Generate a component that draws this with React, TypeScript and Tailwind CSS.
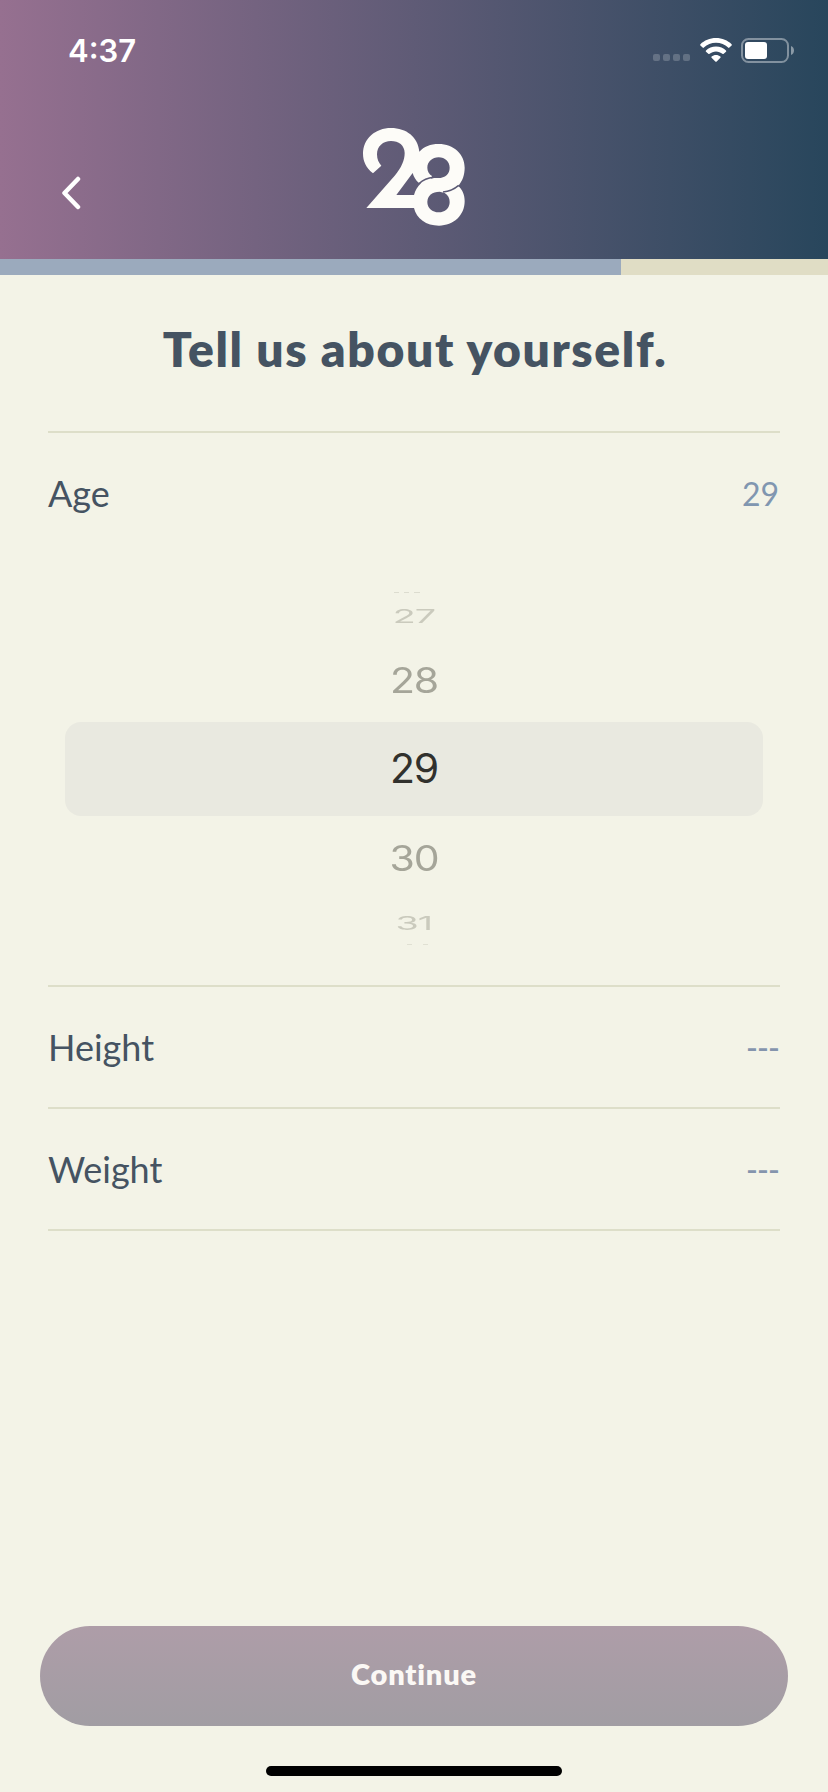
interface RowProps {
  label: string;
  value?: string;
}

interface PickerItem {
  value: number;
  className: string;
}

const PICKER_ITEMS: PickerItem[] = [
  { value: 27, className: "h-[46px] text-[#cacabd] scale-x-[0.92] scale-y-[0.47]" },
  { value: 28, className: "h-[83px] text-[#a5a599] scale-y-[0.86]" },
  { value: 29, className: "h-[94px] text-[#31312d]" },
  { value: 30, className: "h-[86px] text-[#a5a599] scale-y-[0.86]" },
  { value: 31, className: "h-[42px] text-[#cacabd] scale-x-[0.92] scale-y-[0.47]" },
];

function StatusBar() {
  return (
    <div className="flex h-[100px] items-center justify-between pl-[68px] pr-[34px]">
      <span className="font-['Inter',sans-serif] text-[31px] font-semibold leading-[31px] text-white">4:37</span>
      <div className="flex items-center">
        <div className="mr-[10px] mt-[15px] flex gap-[3px]">
          <span className="h-[7px] w-[7px] rounded-[2px] bg-white/20" />
          <span className="h-[7px] w-[7px] rounded-[2px] bg-white/20" />
          <span className="h-[7px] w-[7px] rounded-[2px] bg-white/20" />
          <span className="h-[7px] w-[7px] rounded-[2px] bg-white/20" />
        </div>
        <svg className="mr-[9px] h-6 w-8" viewBox="0 0 32 24" fill="#fff">
          <path d="M16 0C22.2 0 27.800 2.400 31.600 6.200C32 6.600 32 7.100 31.600 7.500L29.400 9.600C29 10 28.500 10 28.100 9.600C24.900 6.500 20.700 4.800 16 4.800C11.300 4.800 7.100 6.500 3.900 9.600C3.500 10 3 10 2.600 9.600L.4 7.500C0 7.100 0 6.600.4 6.200C4.200 2.400 9.800 0 16 0Z" />
          <path d="M16 8.600C20 8.600 23.400 10.100 26 12.400C26.400 12.800 26.400 13.300 26 13.700L23.700 15.800C23.300 16.200 22.800 16.200 22.400 15.800C20.700 14.300 18.500 13.400 16 13.400C13.500 13.400 11.300 14.300 9.600 15.800C9.200 16.200 8.700 16.200 8.300 15.800L6 13.700C5.600 13.300 5.600 12.800 6 12.400C8.600 10.100 12 8.600 16 8.600Z" />
          <path d="M16 17C17.700 17 19.200 17.600 20.400 18.500C20.800 18.900 20.800 19.400 20.400 19.800L16.700 23.500C16.300 23.900 15.700 23.900 15.300 23.500L11.600 19.800C11.200 19.400 11.200 18.900 11.600 18.500C12.800 17.600 14.300 17 16 17Z" />
        </svg>
        <svg className="h-[25px] w-[53px]" viewBox="0 0 53 25">
          <rect x="1" y="1" width="46" height="23" rx="6.500" fill="none" stroke="#fff" strokeOpacity=".4" strokeWidth="2" />
          <rect x="4" y="4" width="22" height="17" rx="3" fill="#fff" />
          <path d="M50 8C54 9.600 54 15.400 50 17Z" fill="#fff" fillOpacity=".45" />
        </svg>
      </div>
    </div>
  );
}

function Logo() {
  return (
    <svg className="h-[98px] w-[102px]" viewBox="68 53 306 294">
      <mask id="logo-cut" maskUnits="userSpaceOnUse" x="60" y="45" width="320" height="310">
        <rect x="60" y="45" width="320" height="310" fill="#fff" />
        <path d="M217 188L168 254H221C225 240 232 229 242 219L235 217C226 210 220 199 217 188Z" fill="#000" />
        <path d="M275 197C266 191 261 182 261 172C261 154 276 141 295 141C314 141 328 154 328 172C328 191 315 203 293 203C285 203 278 203 272 205Z" fill="#000" />
        <path d="M313 248C323 254 328 264 328 275C328 293 314 306 295 306C276 306 261 293 261 275C261 256 276 244 298 244Z" fill="#000" />
        <path d="M236 220C248 209 261 203 280 201M308 245C326 243 341 237 355 225" fill="none" stroke="#000" strokeWidth="4.500" />
      </mask>
      <path
        mask="url(#logo-cut)"
        fill="#fdfcf8"
        d="M78 293L163 196C183 172 193 150 193 128C193 105 175 92 152 92C128 92 110 108 110 132C110 147 115 157 123 166L98 189C77 172 68 153 68 130C68 85 105 53 152 53C198 53 233 80 237 124C251 109 270 101 295 101C340 101 373 132 373 172C373 193 367 212 353 227C367 237 373 255 373 273C373 315 340 346 296 346C258 346 228 325 221 293Z"
      />
    </svg>
  );
}

function Row({ label, value }: RowProps) {
  return (
    <div className="flex h-[120px] items-center justify-between">
      <span className="text-[36px] leading-[44px] text-[#455362]">{label}</span>
      {value ? (
        <span className="pr-px pt-[2px] text-[32px] leading-[44px] text-[#8096b0]">{value}</span>
      ) : (
        <span className="pr-px pt-[2px] text-[32px] font-medium leading-[44px] tracking-[-0.900px] text-[#8494ad]">---</span>
      )}
    </div>
  );
}

function AgePicker() {
  return (
    <div className="relative mx-[17px] h-[432px] font-['Inter',sans-serif] text-[41px] tracking-[-1.200px]">
      {/* Selected band */}
      <div className="absolute inset-x-0 top-[169px] h-[94px] rounded-2xl bg-[#e9e9e0]" />

      <div className="relative flex flex-col items-center pt-[39px]">
        <div className="mr-[14px] flex gap-[5px]">
          <span className="h-px w-[5px] bg-[#dcdccf]" />
          <span className="h-px w-[5px] bg-[#dcdccf]" />
          <span className="h-px w-[6px] bg-[#dcdccf]" />
        </div>
        {PICKER_ITEMS.map((item) => (
          <div key={item.value} className={`flex items-center justify-center ${item.className}`}>
            {item.value}
          </div>
        ))}
        <div className="ml-[7px] flex gap-[11px]">
          <span className="h-px w-[5px] bg-[#e0e0d3]" />
          <span className="h-px w-[5px] bg-[#e0e0d3]" />
        </div>
      </div>
    </div>
  );
}

export default function App() {
  return (
    <div className="flex h-[1792px] w-[828px] flex-col bg-[#f3f3e7] font-['Lato',sans-serif]">
      {/* Header */}
      <header className="h-[259px] bg-linear-to-r/srgb from-[#967090] to-[#28465c]">
        <StatusBar />
        <div className="grid grid-cols-3 px-[62px] pt-[28px]">
          <svg className="mt-[48px] h-[34px] w-[19px]" viewBox="0 0 19 34" fill="none" stroke="#fff" strokeWidth="4.500" strokeLinecap="round" strokeLinejoin="round">
            <path d="M16 3L2.500 17L16 31" />
          </svg>
          <div className="flex justify-center">
            <Logo />
          </div>
        </div>
      </header>

      {/* Progress */}
      <div className="h-4 bg-[#e0ddc5]">
        <div className="h-4 w-3/4 bg-[#9baabd]" />
      </div>

      <main className="flex grow flex-col px-12">
        <h1 className="flex h-[156px] items-center justify-center whitespace-nowrap pb-2 pl-[2px] text-[48px] font-extrabold tracking-[1.600px] text-[#455362]">
          Tell us about yourself.
        </h1>
        <div className="border-y-2 border-[#dddec9]">
          <Row label="Age" value="29" />
          <AgePicker />
        </div>
        <div className="border-b-2 border-[#dddec9]">
          <Row label="Height" />
        </div>
        <div className="border-b-2 border-[#dddec9]">
          <Row label="Weight" />
        </div>
      </main>

      <footer className="flex flex-col items-center px-10 pb-4">
        <button className="h-[100px] w-full rounded-full bg-linear-to-b/srgb from-[#ae9da8] to-[#a19da3] pb-1 text-[29px] font-extrabold tracking-[0.800px] text-[#fbf8f5]">
          Continue
        </button>
        <div className="mt-10 h-[10px] w-[296px] rounded-full bg-black" />
      </footer>
    </div>
  );
}
